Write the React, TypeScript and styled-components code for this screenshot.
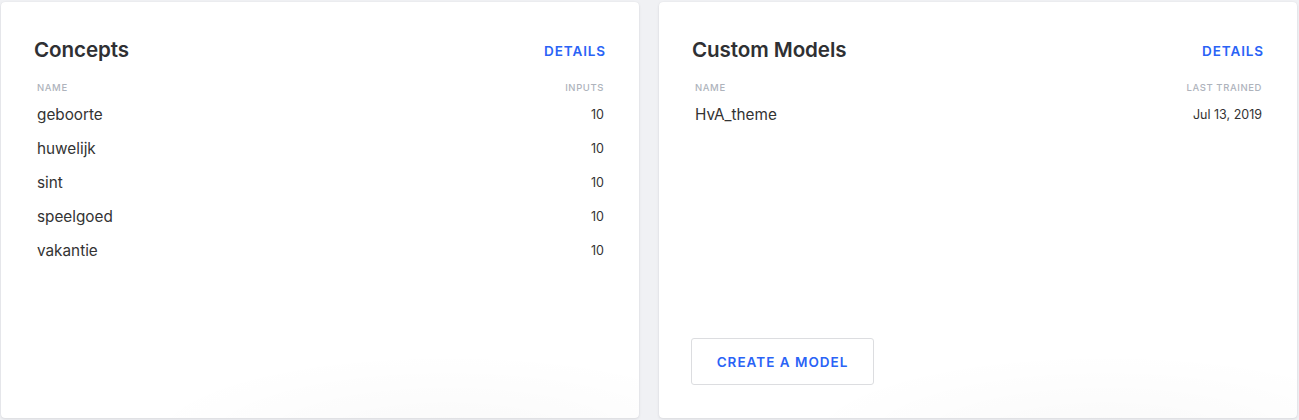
import React from "react";
import styled, { createGlobalStyle } from "styled-components";

const GlobalStyle = createGlobalStyle`
  html, body {
    margin: 0;
    padding: 0;
    background: #f0f1f4;
    font-family: Inter, "Liberation Sans", sans-serif;
    color: #333;
  }
`;

const Page = styled.div`
  display: grid;
  grid-template-columns: 638px 638px;
  gap: 20px;
  padding: 2px 2px 2px 1px;
`;

const Card = styled.section`
  height: 416px;
  box-sizing: border-box;
  background: radial-gradient(ellipse 70% 30% at 70% 105%, rgba(0, 0, 0, 0.025), rgba(0, 0, 0, 0) 70%), #fff;
  border-radius: 4px;
  box-shadow: 0 1px 3px rgba(20, 20, 40, 0.1), 0 0 1px rgba(20, 20, 40, 0.08);
  padding: 33px 33px 33px 32px;
  display: flex;
  flex-direction: column;
`;

const Header = styled.div`
  display: flex;
  justify-content: space-between;
  align-items: center;
  height: 30px;
  padding-left: 1px;
`;

const Title = styled.h2`
  margin: 0 0 2px;
  font-size: 20.6px;
  font-weight: 600;
  color: #2f3033;
  letter-spacing: -0.1px;
`;

const LinkText = styled.a`
  margin-top: 2px;
  font-size: 13.5px;
  font-weight: 600;
  letter-spacing: 0.9px;
  color: #2a63f6;
  text-transform: uppercase;
  cursor: pointer;
`;

const Table = styled.div`
  margin-top: 13px;
  display: flex;
  flex-direction: column;
`;

const HeadRow = styled.div`
  display: flex;
  justify-content: space-between;
  align-items: center;
  height: 19px;
  padding: 0 2px 0 4px;
`;

const HeadCell = styled.span`
  font-size: 9.5px;
  font-weight: 500;
  letter-spacing: 0.6px;
  color: #aeb3bc;
  text-transform: uppercase;
`;

const Row = styled.div`
  display: flex;
  justify-content: space-between;
  align-items: center;
  height: 34px;
  padding: 0 2px 0 4px;
`;

const NameCell = styled.span`
  font-size: 15.3px;
  color: #333;
`;

const ValueCell = styled.span`
  font-size: 12.5px;
  color: #333;
`;

const Button = styled.button`
  margin-top: auto;
  align-self: flex-start;
  width: 183px;
  height: 47px;
  background: #fff;
  border: 1px solid #dcdde0;
  border-radius: 3px;
  font-family: inherit;
  font-size: 13.5px;
  font-weight: 600;
  letter-spacing: 1px;
  color: #2a63f6;
  cursor: pointer;
`;

const concepts = ["geboorte", "huwelijk", "sint", "speelgoed", "vakantie"];

export default function App() {
  return (
    <>
      <GlobalStyle />
      <Page>
        <Card>
          <Header>
            <Title>Concepts</Title>
            <LinkText>Details</LinkText>
          </Header>
          <Table>
            <HeadRow>
              <HeadCell>Name</HeadCell>
              <HeadCell>Inputs</HeadCell>
            </HeadRow>
            {concepts.map((c) => (
              <Row key={c}>
                <NameCell>{c}</NameCell>
                <ValueCell>10</ValueCell>
              </Row>
            ))}
          </Table>
        </Card>
        <Card>
          <Header>
            <Title>Custom Models</Title>
            <LinkText>Details</LinkText>
          </Header>
          <Table>
            <HeadRow>
              <HeadCell>Name</HeadCell>
              <HeadCell>Last Trained</HeadCell>
            </HeadRow>
            <Row>
              <NameCell>HvA_theme</NameCell>
              <ValueCell>Jul 13, 2019</ValueCell>
            </Row>
          </Table>
          <Button>CREATE A MODEL</Button>
        </Card>
      </Page>
    </>
  );
}
